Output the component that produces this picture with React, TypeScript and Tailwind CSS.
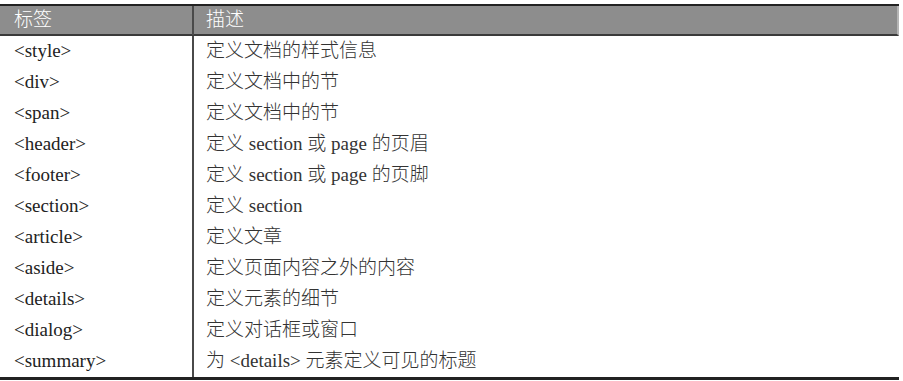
const rows: [string, string][] = [
  ['<style>', '定义文档的样式信息'],
  ['<div>', '定义文档中的节'],
  ['<span>', '定义文档中的节'],
  ['<header>', '定义 section 或 page 的页眉'],
  ['<footer>', '定义 section 或 page 的页脚'],
  ['<section>', '定义 section'],
  ['<article>', '定义文章'],
  ['<aside>', '定义页面内容之外的内容'],
  ['<details>', '定义元素的细节'],
  ['<dialog>', '定义对话框或窗口'],
  ['<summary>', '为 <details> 元素定义可见的标题'],
];

export default function App() {
  return (
    <div
      className="w-[903px] h-[381px] bg-white pt-[4px]"
      style={{ fontFamily: '"Liberation Serif", "Noto Sans CJK SC", serif' }}
    >
      <div className="w-[899px] border-t-2 border-b-[3px] border-[#222]">
        {/* 表头 */}
        <div className="grid grid-cols-[194px_1fr] h-[30px] bg-[#8d8d8d] border-b-2 border-[#3a3a3a] border-r-2 border-r-[#b5b5b5] text-white text-[19px] font-light">
          <div className="flex items-center pl-[14px] border-r-2 border-[#4a4a4a]">
            标签
          </div>
          <div className="flex items-center pl-[12px]">描述</div>
        </div>

        {/* 内容 */}
        {rows.map(([tag, desc]) => (
          <div key={tag} className="grid grid-cols-[194px_1fr] h-[31px] text-[19px] text-[#333] font-light">
            <div className="flex items-center pl-[14px] border-r-2 border-[#4a4a4a] text-[#222]">{tag}</div>
            <div className="flex items-center pl-[12px]">{desc}</div>
          </div>
        ))}
      </div>
    </div>
  );
}
